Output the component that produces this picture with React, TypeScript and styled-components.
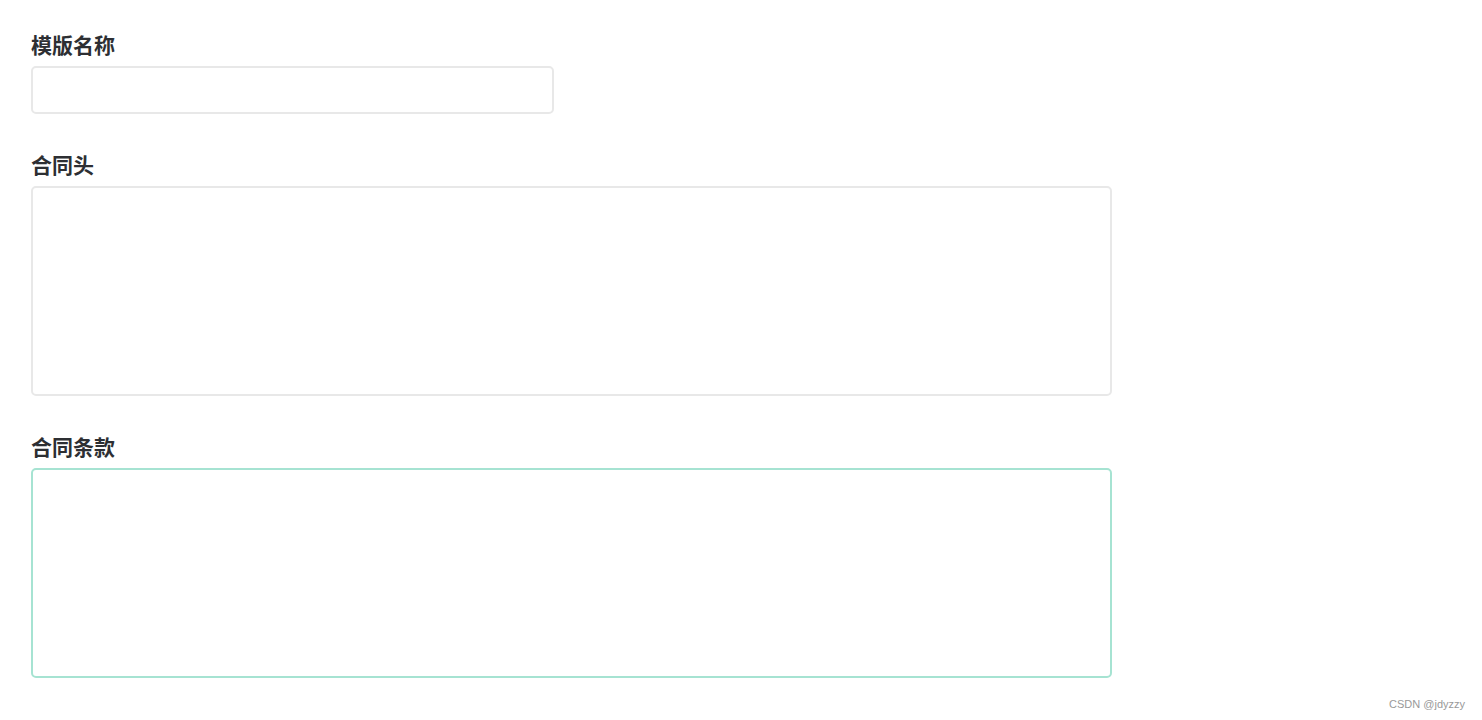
import styled, { createGlobalStyle } from "styled-components";

const GlobalStyle = createGlobalStyle`
  html, body {
    margin: 0;
    padding: 0;
    background: #fff;
    font-family: "Noto Sans CJK SC", "Liberation Sans", sans-serif;
  }
`;

const Page = styled.div`
  position: relative;
  width: 1482px;
  height: 720px;
  box-sizing: border-box;
  padding: 29px 0 0 31px;
  display: flex;
  flex-direction: column;
  gap: 35px;
`;

const Field = styled.div`
  display: flex;
  flex-direction: column;
`;

const Label = styled.label`
  font-size: 21px;
  line-height: 30px;
  font-weight: 700;
  color: #2d2f33;
  margin-bottom: 7px;
`;

const Input = styled.input`
  box-sizing: border-box;
  width: 523px;
  height: 48px;
  border: 2px solid #e8e8e8;
  border-radius: 5px;
  outline: none;
  padding: 0 10px;
  font-size: 16px;
`;

const TextArea = styled.textarea<{ $focused?: boolean }>`
  box-sizing: border-box;
  width: 1081px;
  height: 210px;
  border: 2px solid ${(p) => (p.$focused ? "#a6e3d2" : "#e8e8e8")};
  border-radius: 5px;
  outline: none;
  resize: none;
  padding: 10px;
  font-size: 16px;
  font-family: inherit;
`;

const Watermark = styled.div`
  position: absolute;
  right: 17px;
  bottom: 10px;
  font-family: "Liberation Sans", Arial, sans-serif;
  font-size: 11px;
  color: #999;
`;

export default function App() {
  return (
    <>
      <GlobalStyle />
      <Page>
        <Field>
          <Label>模版名称</Label>
          <Input />
        </Field>
        <Field>
          <Label>合同头</Label>
          <TextArea />
        </Field>
        <Field>
          <Label>合同条款</Label>
          <TextArea $focused />
        </Field>
        <Watermark>CSDN @jdyzzy</Watermark>
      </Page>
    </>
  );
}
